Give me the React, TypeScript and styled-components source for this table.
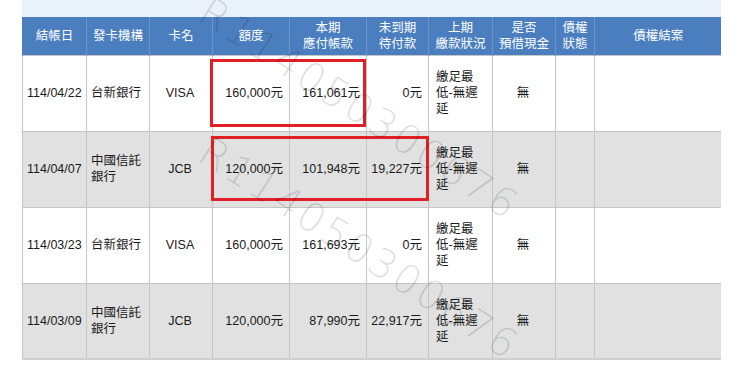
import React from "react"
import styled, { createGlobalStyle } from 'styled-components'

const GlobalStyle = createGlobalStyle`
  body {
    margin: 0;
    background: #ffffff;
    font-family: "Liberation Sans", "Noto Sans CJK TC", Arial, sans-serif;
  }
`

type Record = {
  date: string
  bank: string
  card: string
  limit: string
  due: string
  unpaid: string
  status: string
  cash: string
}

const records: Record[] = [
  { date: '114/04/22', bank: '台新銀行', card: 'VISA', limit: '160,000元', due: '161,061元', unpaid: '0元', status: '繳足最低-無遲延', cash: '無' },
  { date: '114/04/07', bank: '中國信託銀行', card: 'JCB', limit: '120,000元', due: '101,948元', unpaid: '19,227元', status: '繳足最低-無遲延', cash: '無' },
  { date: '114/03/23', bank: '台新銀行', card: 'VISA', limit: '160,000元', due: '161,693元', unpaid: '0元', status: '繳足最低-無遲延', cash: '無' },
  { date: '114/03/09', bank: '中國信託銀行', card: 'JCB', limit: '120,000元', due: '87,990元', unpaid: '22,917元', status: '繳足最低-無遲延', cash: '無' },
]

const widths = [64, 63, 63, 77, 77, 62, 64, 63, 39, 127]

const Wrapper = styled.div`
  position: relative;
  width: 699px;
  margin-left: 22px;
  overflow: hidden;
  height: 379px;
`

const TopBand = styled.div`
  height: 17px;
  background: #e9f1fa;
`

const Table = styled.table`
  width: 699px;
  table-layout: fixed;
  border-collapse: collapse;
  font-size: 12.5px;
  color: #1a1a1a;
  border-bottom: 2px solid #cfcfcf;
`

const HeadCell = styled.th`
  height: 38px;
  padding: 0 2px;
  background: #4a7ebe;
  color: #ffffff;
  font-weight: normal;
  line-height: 16px;
  text-align: center;
  border-left: 1px solid #6c96c9;
  box-sizing: border-box;
  &:first-child { border-left: 1px solid #4a7ebe; }
`

const Row = styled.tr<{ $shaded: boolean }>`
  height: 76px;
  background: ${p => (p.$shaded ? '#e1e1e1' : '#ffffff')};
`

const Cell = styled.td<{ $align?: 'left' | 'right' | 'center' }>`
  padding: 4px 6px 4px 4px;
  border: 1px solid #c6c6c6;
  text-align: ${p => p.$align || 'left'};
  vertical-align: middle;
  line-height: 16px;
`

const StatusText = styled.span`
  display: block;
  max-width: 46px;
  padding-left: 3px;
`

const Highlight = styled.div<{ $x: number; $y: number; $w: number; $h: number }>`
  position: absolute;
  left: ${p => p.$x}px;
  top: ${p => p.$y}px;
  width: ${p => p.$w}px;
  height: ${p => p.$h}px;
  border: 3px solid #e11f27;
  box-sizing: border-box;
  pointer-events: none;
`

const Watermark = styled.div<{ $top: number }>`
  position: absolute;
  left: 194px;
  top: ${p => p.$top}px;
  transform-origin: left top;
  transform: rotate(33deg);
  font-family: "DejaVu Sans", sans-serif;
  font-weight: 200;
  font-size: 40px;
  letter-spacing: 3px;
  color: rgba(0, 0, 0, 0.13);
  white-space: nowrap;
  pointer-events: none;
`

const heads = [
  ['結帳日'], ['發卡機構'], ['卡名'], ['額度'], ['本期', '應付帳款'],
  ['未到期', '待付款'], ['上期', '繳款狀況'], ['是否', '預借現金'], ['債權', '狀態'], ['債權結案'],
]

export default function App() {
  return (
    <>
      <GlobalStyle />
      <Wrapper>
        <TopBand />
        <Table>
          <colgroup>
            {widths.map((w, i) => <col key={i} style={{ width: w }} />)}
          </colgroup>
          <thead>
            <tr>
              {heads.map((h, i) => (
                <HeadCell key={i}>
                  {h.map((line, j) => <React.Fragment key={j}>{j > 0 && <br />}{line}</React.Fragment>)}
                </HeadCell>
              ))}
            </tr>
          </thead>
          <tbody>
            {records.map((r, i) => (
              <Row key={i} $shaded={i % 2 === 1}>
                <Cell>{r.date}</Cell>
                <Cell>{r.bank}</Cell>
                <Cell $align="center">{r.card}</Cell>
                <Cell $align="right">{r.limit}</Cell>
                <Cell $align="right">{r.due}</Cell>
                <Cell $align="right">{r.unpaid}</Cell>
                <Cell><StatusText>{r.status}</StatusText></Cell>
                <Cell $align="center">{r.cash}</Cell>
                <Cell />
                <Cell />
              </Row>
            ))}
          </tbody>
        </Table>
        <Highlight $x={188} $y={59} $w={156} $h={68} />
        <Highlight $x={189} $y={136} $w={218} $h={65} />
        <Watermark $top={-12}>R114050300676</Watermark>
        <Watermark $top={128}>R114050300676</Watermark>
      </Wrapper>
    </>
  )
}
